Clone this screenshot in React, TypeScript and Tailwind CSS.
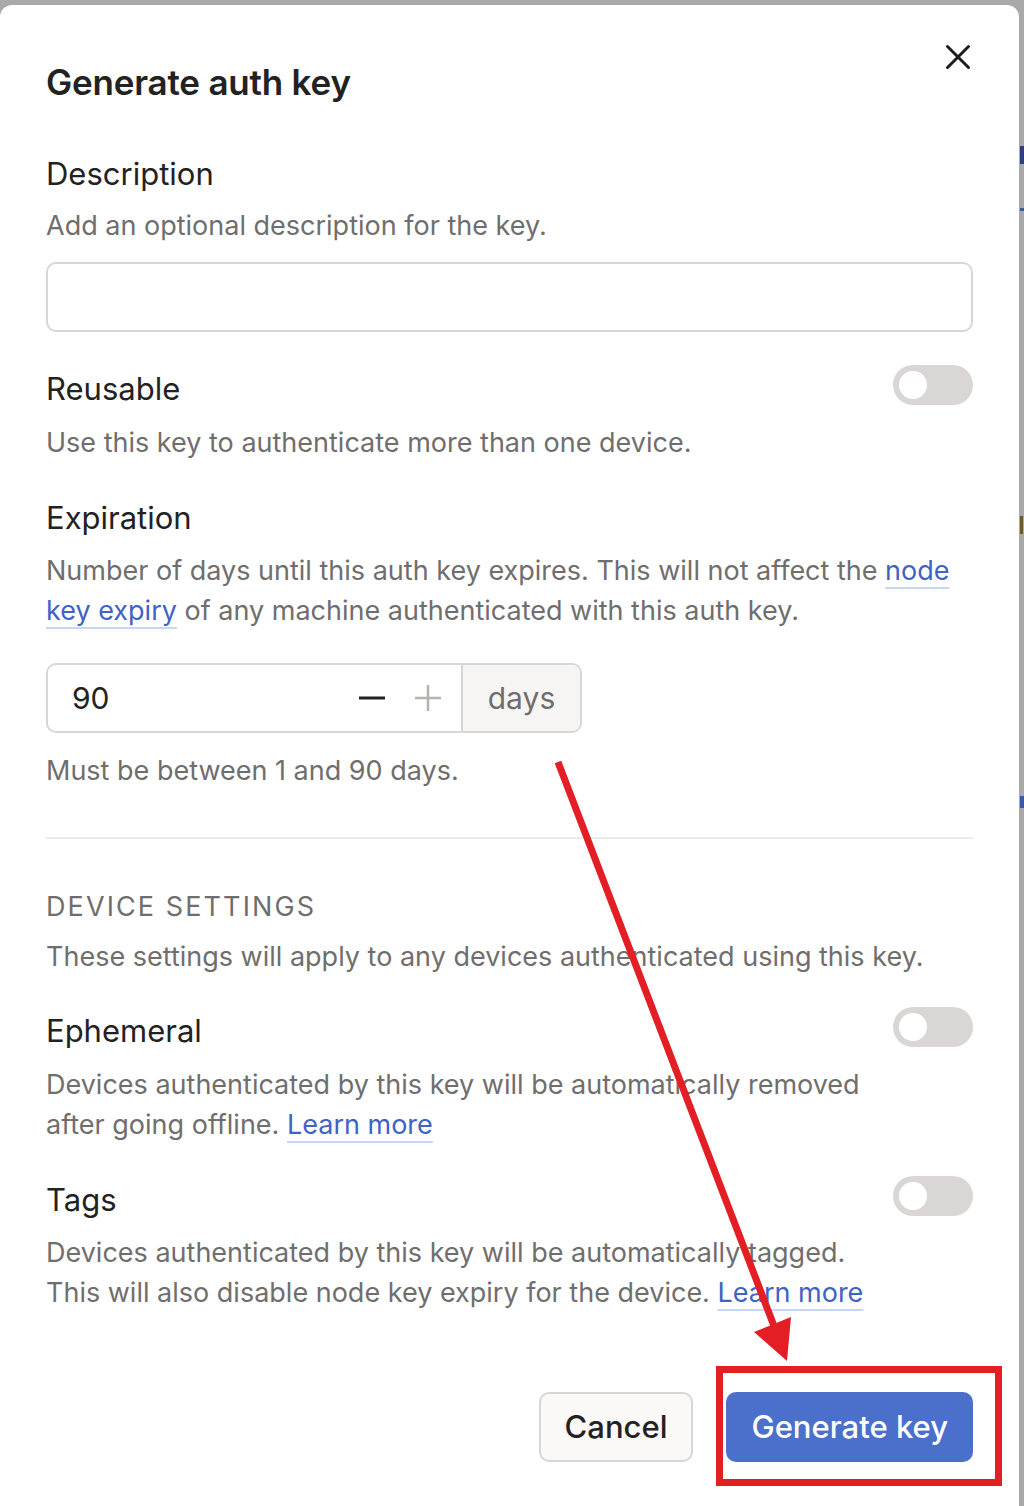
import React from "react";

function Toggle() {
  return (
    <div className="w-[80px] h-[40px] rounded-full bg-[#dad6d5] flex items-center px-[6px] shrink-0">
      <div className="w-[28px] h-[28px] rounded-full bg-white" />
    </div>
  );
}

function Link({ children }: { children: React.ReactNode }) {
  return (
    <a className="text-[#3f63c4] underline decoration-[#c8d5f3] decoration-2 underline-offset-[7px]">
      {children}
    </a>
  );
}

export default function App() {
  return (
    <div
      className="w-[1024px] h-[1506px] bg-[#a9a9a9] relative overflow-hidden"
      style={{ fontFamily: "Inter, 'Noto Sans', sans-serif" }}
    >
      {/* peeking background page marks */}
      <div className="absolute left-[1020px] top-[146px] w-[4px] h-[18px] bg-[#2d3f7d]" />
      <div className="absolute left-[1020px] top-[208px] w-[4px] h-[3px] bg-[#3a57a8]" />
      <div className="absolute left-[1020px] top-[516px] w-[3px] h-[18px] bg-[#6b5a2a]" />
      <div className="absolute left-[1020px] top-[796px] w-[4px] h-[12px] bg-[#3a57a8]" />

      <div className="mt-[5px] w-[1019px] h-[1501px] bg-white rounded-t-[12px] relative px-[46px] pt-[57px] text-[#232222]">
        <button className="absolute left-[945px] top-[39px] w-[26px] h-[26px] flex items-center justify-center">
          <svg width="26" height="26" viewBox="0 0 26 26" fill="none" stroke="#1c1c1c" strokeWidth="3" strokeLinecap="round">
            <line x1="2.5" y1="2.5" x2="23.5" y2="23.5" />
            <line x1="23.5" y1="2.5" x2="2.5" y2="23.5" />
          </svg>
        </button>

        <h2 className="text-[35px] leading-[40px] font-semibold tracking-[-0.2px]">Generate auth key</h2>

        <div className="mt-[54px] text-[31px] leading-[36px] font-normal">Description</div>
        <p className="mt-[14px] text-[27px] leading-[40px] text-[#706e6d]">Add an optional description for the key.</p>
        <div className="mt-[16px] h-[70px] w-full rounded-[10px] border-2 border-[#dad6d5]" />

        <div className="mt-[33px] flex justify-between items-start">
          <div className="pt-[6px] text-[31px] leading-[36px] font-normal">Reusable</div>
          <Toggle />
        </div>
        <p className="mt-[16px] text-[27px] leading-[40px] text-[#706e6d]">Use this key to authenticate more than one device.</p>

        <div className="mt-[37px] text-[31px] leading-[36px] font-normal">Expiration</div>
        <p className="mt-[15px] text-[27px] leading-[40px] text-[#706e6d]">
          Number of days until this auth key expires. This will not affect the <Link>node key expiry</Link> of any machine authenticated with this auth key.
        </p>

        <div className="mt-[32px] w-[536px] h-[70px] flex rounded-[10px] border-2 border-[#dad6d5] overflow-hidden">
          <div className="flex-1 flex items-center pl-[24px] pr-[20px]">
            <span className="flex-1 text-[30px] text-[#232222]">90</span>
            <svg width="26" height="26" viewBox="0 0 26 26" className="mr-[30px]">
              <line x1="0" y1="13" x2="26" y2="13" stroke="#232222" strokeWidth="3" />
            </svg>
            <svg width="26" height="26" viewBox="0 0 26 26">
              <line x1="0" y1="13" x2="26" y2="13" stroke="#b5b2b1" strokeWidth="2.5" />
              <line x1="13" y1="0" x2="13" y2="26" stroke="#b5b2b1" strokeWidth="2.5" />
            </svg>
          </div>
          <div className="w-[119px] border-l-2 border-[#dad6d5] bg-[#f7f5f4] flex items-center justify-center text-[30px] text-[#706e6d]">
            days
          </div>
        </div>
        <p className="mt-[18px] text-[27px] leading-[40px] text-[#706e6d]">Must be between 1 and 90 days.</p>

        <div className="mt-[46px] h-[2px] bg-[#edebea]" />

        <div className="mt-[48px] text-[27px] leading-[40px] text-[#706e6d] tracking-[2.1px] uppercase">Device settings</div>
        <p className="mt-[10px] text-[27px] leading-[40px] text-[#706e6d]">These settings will apply to any devices authenticated using this key.</p>

        <div className="mt-[30px] flex justify-between items-start">
          <div className="pt-[6px] text-[31px] leading-[36px] font-normal">Ephemeral</div>
          <Toggle />
        </div>
        <p className="mt-[16px] text-[27px] leading-[40px] text-[#706e6d] w-[840px]">
          Devices authenticated by this key will be automatically removed after going offline. <Link>Learn more</Link>
        </p>

        <div className="mt-[31px] flex justify-between items-start">
          <div className="pt-[6px] text-[31px] leading-[36px] font-normal">Tags</div>
          <Toggle />
        </div>
        <p className="mt-[15px] text-[27px] leading-[40px] text-[#706e6d]">
          Devices authenticated by this key will be automatically tagged.
          <br />
          This will also disable node key expiry for the device. <Link>Learn more</Link>
        </p>

        <div className="mt-[79px] flex justify-end gap-[33px]">
          <button className="h-[70px] px-[24px] rounded-[10px] border-2 border-[#dad6d5] bg-[#faf9f8] text-[31px] font-medium text-[#232222]">
            Cancel
          </button>
          <button className="h-[70px] px-[25px] rounded-[10px] bg-[#4b70cc] text-[31px] font-medium text-white">
            Generate key
          </button>
        </div>
      </div>

      <svg className="absolute left-0 top-0 pointer-events-none" width="1024" height="1506" viewBox="0 0 1024 1506">
        <line x1="558" y1="762" x2="774" y2="1326" stroke="#e31e24" strokeWidth="7" />
        <polygon points="754,1332 791,1317 787,1361" fill="#e31e24" />
        <rect x="719.5" y="1369.5" width="279" height="113" fill="none" stroke="#e31e24" strokeWidth="7" />
      </svg>
    </div>
  );
}
